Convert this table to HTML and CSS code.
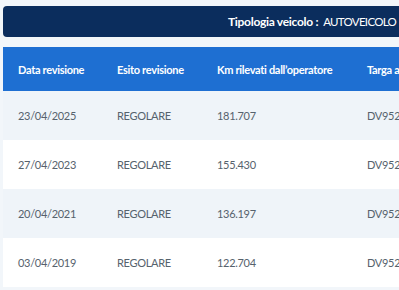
FILE: index.html
```html
<!DOCTYPE html>
<html lang="it">
<head>
<meta charset="utf-8">
<title>Revisioni</title>
<link rel="stylesheet" href="styles.css">
</head>
<body>
<div class="page">
  <div class="vehicle-bar">
    <span class="vehicle-label">Tipologia veicolo :</span>
    <span class="vehicle-value">AUTOVEICOLO</span>
  </div>
  <table class="revisions">
    <thead>
      <tr>
        <th class="c1">Data revisione</th>
        <th class="c2">Esito revisione</th>
        <th class="c3">Km rilevati dall’operatore</th>
        <th class="c4">Targa associata</th>
      </tr>
    </thead>
    <tbody>
      <tr><td>23/04/2025</td><td>REGOLARE</td><td>181.707</td><td>DV952XX</td></tr>
      <tr><td>27/04/2023</td><td>REGOLARE</td><td>155.430</td><td>DV952XX</td></tr>
      <tr><td>20/04/2021</td><td>REGOLARE</td><td>136.197</td><td>DV952XX</td></tr>
      <tr><td>03/04/2019</td><td>REGOLARE</td><td>122.704</td><td>DV952XX</td></tr>
    </tbody>
  </table>
</div>
</body>
</html>
```
FILE: styles.css
```css
html, body {
  margin: 0;
  padding: 0;
  overflow: hidden;
  background: #f2f6fa;
  font-family: "Lato", "Open Sans", sans-serif;
}
.page {
  padding: 6px 0 0 3px;
  width: 640px;
}
.vehicle-bar {
  background: #0b2d5d;
  border-radius: 4px;
  height: 31px;
  display: flex;
  align-items: center;
  padding-left: 225px;
  color: #fff;
  font-size: 12px;
  gap: 5px;
}
.vehicle-label { font-weight: 700; letter-spacing: -0.3px; }
.vehicle-value { font-weight: 400; font-size: 11.5px; letter-spacing: -0.7px; }
.revisions {
  margin-top: 10px;
  border-collapse: collapse;
  width: 640px;
  table-layout: fixed;
}
.revisions th {
  background: #1e6fd2;
  color: #fff;
  font-weight: 700;
  font-size: 11px;
  letter-spacing: -0.3px;
  text-align: left;
  height: 44px;
  padding: 0 0 0 15px;
  white-space: nowrap;
}
.revisions .c1 { width: 84px; }
.revisions .c2 { width: 85px; }
.revisions .c3 { width: 135px; }
.revisions td {
  height: 49px;
  padding: 0 0 0 15px;
  font-size: 11px;
  letter-spacing: -0.3px;
  color: #56626d;
  white-space: nowrap;
}
.revisions tbody tr:nth-child(odd) td { background: #eff4f9; }
.revisions tbody tr:nth-child(even) td { background: #ffffff; }
```
